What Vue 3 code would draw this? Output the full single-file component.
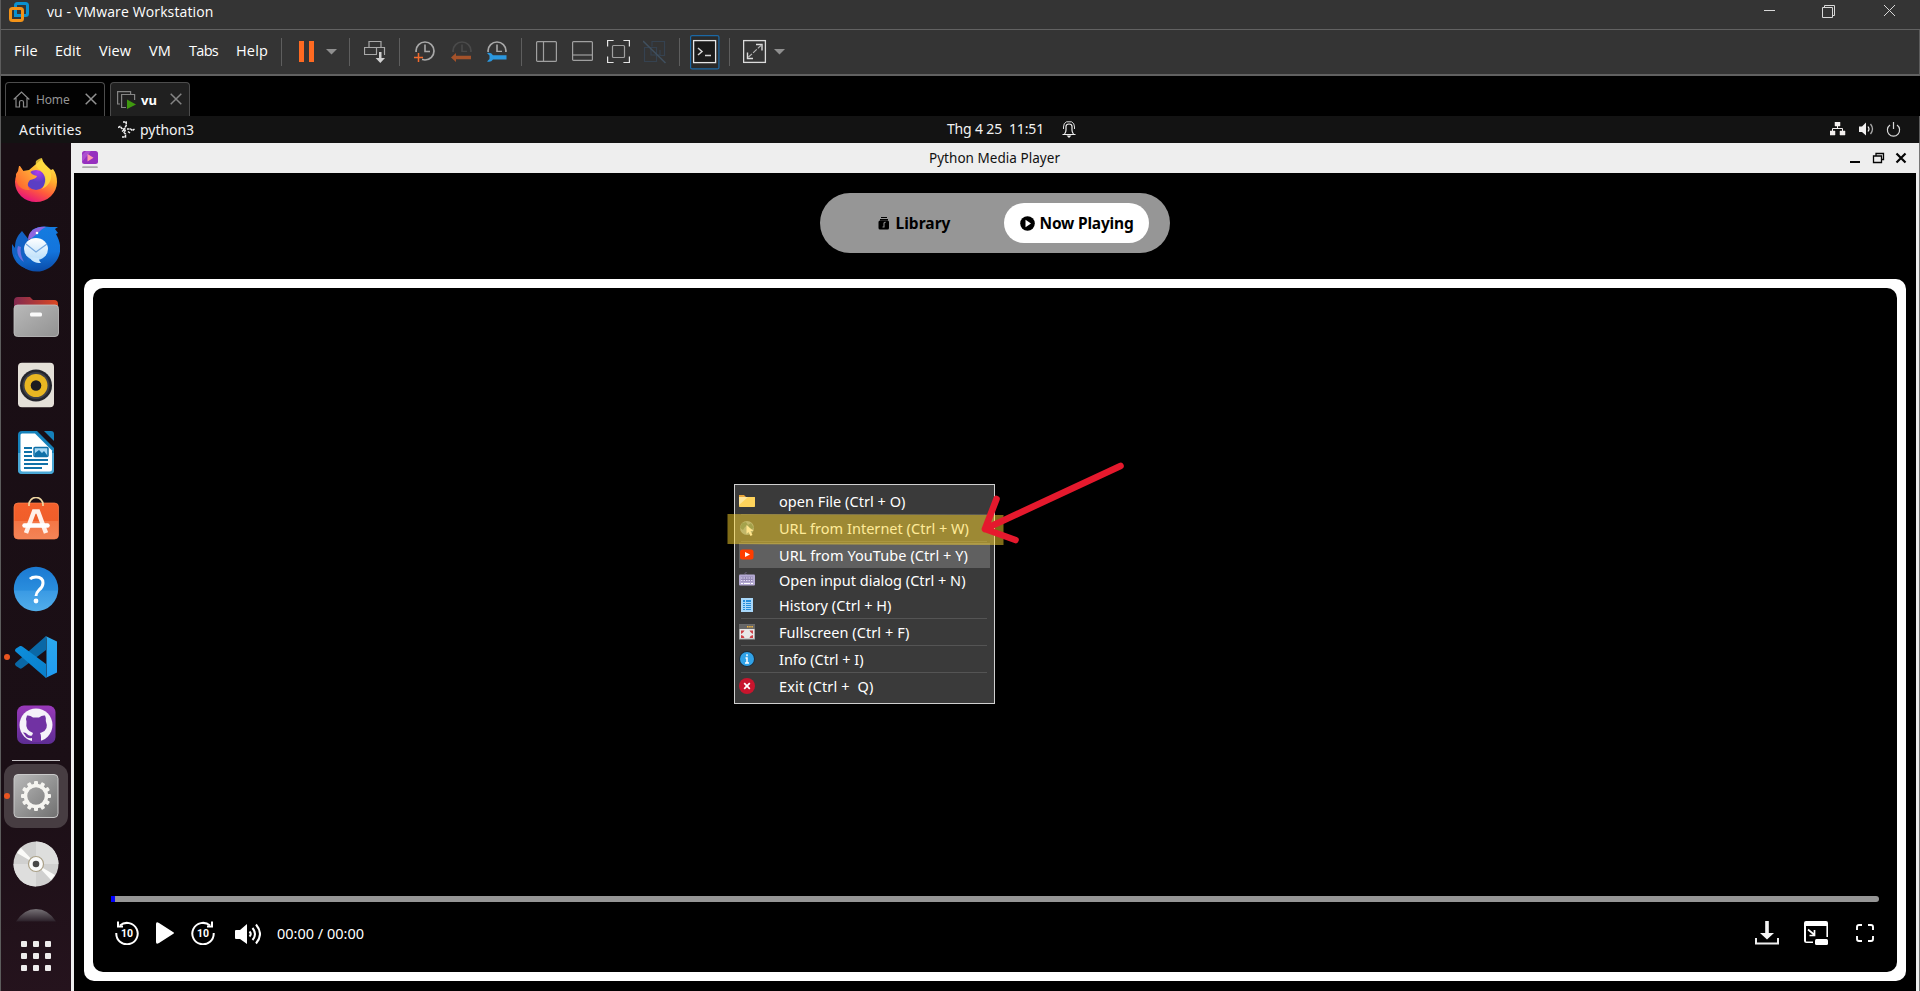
<script setup>
const menus = [
  ['File', 24], ['Edit', 26], ['View', 32], ['VM', 22], ['Tabs', 29], ['Help', 32],
]

// Spreads a label over an exact advance width through letter spacing.
const vFit = {
  mounted(el, { value }) {
    const spacing = (value - el.getBoundingClientRect().width) / el.textContent.length
    el.style.letterSpacing = `${spacing}px`
  },
}

const clock = (c) =>
  `<circle cx="11" cy="21" r="9" fill="none" stroke="${c}" stroke-width="1.7"/><path d="M11 14.5v7h5" fill="none" stroke="${c}" stroke-width="1.6"/>`
const rule = '<path d="M.5 8v28" stroke="#5e5e5e"/>'
const caret = '<path d="M0 19h11l-5.500 5.500z" fill="#8f8f8f"/>'

const tools = [
  { gap: 13, w: 1, art: rule },
  { gap: 17, w: 16, art: '<path d="M0 11h5v21H0zM10 11h5v21h-5z" fill="#ff6a21"/>' },
  { gap: 11, w: 11, art: caret },
  { gap: 12, w: 1, art: rule },
  { gap: 14, w: 22, art: '<path d="M5 17.500v-6h12v6M.5 17.500h20v7H.5zM12.500 17.500v7" fill="none" stroke="#a9a9a9" stroke-width="1.200"/><path d="M13 23.500h7v6h-7z" fill="#343434"/><path d="M15 22h2.500v6h3.500l-4.700 5-4.700-5h3.400z" fill="#d0d0d0"/>' },
  { gap: 13, w: 1, art: rule },
  { gap: 14, w: 22, art: clock('#a8a8a8') + '<path d="M0 22h6v11H0zM0 22h8v8H0z" fill="#343434"/><path d="M4.500 23v9M0 27.500h9" stroke="#f26a2c" stroke-width="1.500"/>' },
  { gap: 15, w: 22, art: clock('#4a4a4a') + '<path d="M0 22h22v12H0z" fill="#343434"/><path d="M0 27.500l5-4.500v2.800h15v3.500H5v2.800z" fill="#a4522a"/>' },
  { gap: 13, w: 23, art: clock('#a8a8a8') + '<path d="M0 22h22v12H0z" fill="#343434"/><path d="M1 23q4-1 6 2.200h13.500v4.300H7q-2 3.200-6 2l2.500-2.500v-3.500z" fill="#2b98df"/>' },
  { gap: 12, w: 1, art: rule },
  { gap: 14, w: 22, art: '<rect x=".6" y="11.600" width="19.800" height="19.800" rx="1" fill="none" stroke="#a0a0a0" stroke-width="1.200"/><path d="M7.500 12v19" stroke="#a0a0a0" stroke-width="1.200"/>' },
  { gap: 14, w: 22, art: '<rect x=".6" y="11.600" width="19.800" height="18.800" rx="1" fill="none" stroke="#a0a0a0" stroke-width="1.200"/><path d="M1 25h19" stroke="#a0a0a0" stroke-width="1.200"/>' },
  { gap: 13, w: 24, art: '<path d="M.6 16.500v-6h6M16.400 10.500h6v6M.6 26.500v6h6M16.400 32.500h6v-6" fill="none" stroke="#e4e4e4" stroke-width="1.200"/><rect x="5.500" y="15.500" width="12" height="12" rx="1" fill="none" stroke="#a0a0a0" stroke-width="1.200"/>' },
  { gap: 12, w: 24, art: '<path d="M9 16.500v-5h12.500v14h-5M1.500 17.500h12v14h-12zM8 17v8h9v-5" fill="none" stroke="#354250" stroke-width="1.200"/><path d="M0 11l22.500 22" stroke="#40505f" stroke-width="1.500"/>' },
  { gap: 12, w: 1, art: rule },
  { gap: 10, w: 30, art: '<rect x=".6" y="5.600" width="28.300" height="33.300" rx="1.500" fill="#2a2a2a" stroke="#1b68a5" stroke-width="1.200"/><rect x="3.600" y="10.600" width="22" height="22" fill="#1b1b1b" stroke="#e6e6e6" stroke-width="1.300"/><path d="M8 18l4 3.500L8 25M15 25.500h6" fill="none" stroke="#d5d5d5" stroke-width="1.500"/>' },
  { gap: 9, w: 1, art: rule },
  { gap: 13, w: 24, art: '<rect x=".6" y="10.600" width="21.800" height="21.800" fill="none" stroke="#dcdcdc" stroke-width="1.300"/><path d="M13 14.500h6v6M10 28.500H4.500v-6" fill="none" stroke="#dcdcdc" stroke-width="1.400"/><path d="M18.500 15l-14 13" stroke="#b5b5b5" stroke-width="1.200" stroke-dasharray="5 1.500"/>' },
  { gap: 7, w: 11, art: caret },
]

const gearTeeth = Array.from({ length: 12 }, (_, i) =>
  `<rect x="22" y="9" width="4" height="6" rx="1" fill="#f5f4f0" transform="rotate(${i * 30} 24 24)"/>`).join('')

const apps = [
  { name: 'firefox', art: '<defs><linearGradient id="ff" x1=".8" y1="0" x2=".35" y2="1"><stop offset="0" stop-color="#fff04f"/><stop offset=".4" stop-color="#ffae2d"/><stop offset=".7" stop-color="#ff5a3c"/><stop offset="1" stop-color="#e6127c"/></linearGradient><linearGradient id="ffl" x1="1" y1="0" x2="0" y2="1"><stop offset="0" stop-color="#ffc23a"/><stop offset="1" stop-color="#ff5a2c"/></linearGradient><radialGradient id="ffg" cx=".6" cy=".1"><stop offset="0" stop-color="#b03cf0"/><stop offset="1" stop-color="#5b3ec4"/></radialGradient></defs><path d="M30 2c1 5 5 7 9 11l2-1c3 4 4 8 4 13a21 20 0 0 1-42 0c0-5 2-9 5-13v-2l3 4 6-1z" fill="url(#ff)"/><circle cx="24" cy="23" r="10" fill="url(#ffg)"/><path d="M8 9l4 6 6-1c1 3 3 4 7 5-1 3-4 3-7 4-3 3-3 7 0 10C8 34 3 26 4 17l2-3 1-5z" fill="url(#ffl)"/><path d="M24 4c2-2 5-3 6-3 0 5 8 9 9 16s-3 12-9 15c4-6 5-13-2-19-3-2-5-5-4-9z" fill="#ffdd40" opacity=".8"/>' },
  { name: 'thunderbird', art: '<defs><linearGradient id="tb" x1=".4" y1="0" x2=".5" y2="1"><stop offset="0" stop-color="#147ce0"/><stop offset=".6" stop-color="#1374dc"/><stop offset="1" stop-color="#0b4ca8"/></linearGradient><linearGradient id="mail" x2="0" y2="1"><stop stop-color="#fff"/><stop offset="1" stop-color="#b9defa"/></linearGradient></defs><path d="M10 6c4 5 6 8 9 11 3 3 5 8 4 15l3 12C8 47 0 34 0 25v-6l3 4c0-7 2-12 7-17z" fill="#1262c4"/><path d="M20 5c6-4 13-4 18-3h8l-3 2 3 4-2 1c8 14 4 27-7 34C23 52 5 43 3 29c3 5 7 8 12 9z" fill="url(#tb)"/><path d="M16 15c0-9 8-14 18-13-6 2-9 9-18 13z" fill="#8f65df"/><circle cx="25" cy="8" r="1.300" fill="#fff"/><ellipse cx="24" cy="24" rx="12" ry="11" fill="url(#mail)"/><path d="M18 32c1 4 5 6 11 6-2-2-2-4-2-5z" fill="#cae7fd"/><path d="M14 19l10 8 11-8" fill="none" stroke="#75a8df" stroke-width="1.200"/><path d="M6 21c-2 6 0 12 6 16-3-6-4-10-3-15" fill="#6c70df"/>' },
  { name: 'files', art: '<defs><linearGradient id="fo"><stop offset="0" stop-color="#82294f"/><stop offset="1" stop-color="#dc4823"/></linearGradient><linearGradient id="fg" x2="1" y2="1"><stop stop-color="#b9b9b9"/><stop offset="1" stop-color="#929292"/></linearGradient></defs><g transform="translate(0 1)"><path d="M2 7q0-4 4-4h12l3 3h21q4 0 4 4v16H2z" fill="url(#fo)"/><rect x="2" y="11" width="44.500" height="31.500" rx="3.500" fill="url(#fg)" stroke="#c5c5c5" stroke-width=".8"/><rect x="18" y="18.500" width="12" height="4" rx="1.500" fill="#fafafa"/></g>' },
  { name: 'rhythmbox', art: '<rect x="6" y="1.700" width="36" height="44.500" rx="4" fill="#e4e0d8"/><circle cx="24" cy="24.500" r="16" fill="#24252c"/><circle cx="24" cy="24.500" r="13.500" fill="#3f4148"/><circle cx="24" cy="24.500" r="11.500" fill="#e9b722"/><circle cx="24" cy="24.500" r="5.300" fill="#1c1c20"/>' },
  { name: 'writer', art: '<path d="M10 2h15l17 17v22q0 4-4 4H10q-4 0-4-4V6q0-4 4-4z" fill="#1581ba"/><path d="M6 24h36v17q0 4-4 4H10q-4 0-4-4z" fill="#49a7d5"/><path d="M10 4.500h13l17 17V40q0 2.500-2.500 2.500h-27Q8.500 42.500 8.500 40V6q0-1.500 1.500-1.500z" fill="#fff"/><path d="M32 2h7q3 0 3 3v7z" fill="#1581ba"/><path d="M12 19h8M12 23h8M12 27h8M12 31h24M12 35h24M12 39h18" stroke="#1071a8" stroke-width="2"/><rect x="22" y="18.500" width="14" height="9" rx="1" fill="#a7d8f4" stroke="#1071a8" stroke-width="1.500"/><path d="M23 27v-3l4-3 3 3 2-2 3 4v1z" fill="#1071a8"/>' },
  { name: 'software', art: '<defs><linearGradient id="so" x2="0" y2="1"><stop stop-color="#f4602c"/><stop offset=".5" stop-color="#f05e2a"/><stop offset=".51" stop-color="#f47645"/><stop offset="1" stop-color="#f38457"/></linearGradient></defs><g transform="translate(0 -2)"><rect x="2" y="8" width="44.500" height="36" rx="4" fill="url(#so)" stroke="#ff814e" stroke-width=".7"/><path d="M17 11V9.500a7 7 0 0 1 14 0V11" fill="none" stroke="#eed6a1" stroke-width="1.700"/><path d="M14 38l8-21.500h4L34 38" fill="none" stroke="#fff0e9" stroke-width="4.500"/><path d="M12.500 30.500h23" stroke="#fff" stroke-width="4.500" stroke-linecap="round"/></g>' },
  { name: 'help', art: '<defs><linearGradient id="hp" x2="0" y2="1"><stop stop-color="#1b79d2"/><stop offset=".53" stop-color="#2a8edd"/><stop offset=".54" stop-color="#3a9ae4"/><stop offset="1" stop-color="#52aeea"/></linearGradient></defs><circle cx="24" cy="24" r="22.200" fill="url(#hp)"/><path d="M18 14q2-2 6-2 7 0 7 6 0 4-4 7-3 3-3 6" fill="none" stroke="#fff" stroke-width="3"/><circle cx="24" cy="36" r="2.400" fill="#fff"/>' },
  { name: 'code', running: true, art: '<defs><linearGradient id="vc" x2="1" y2="1"><stop stop-color="#0d8fdc"/><stop offset="1" stop-color="#0a7fca"/></linearGradient><linearGradient id="vr" x2="0" y2="1"><stop stop-color="#2ba8ec"/><stop offset="1" stop-color="#209bf2"/></linearGradient></defs><path d="M4 33l4 2.500q1.500.5 3-1L34 17V3L4 29.500q-2 1.500 0 3.500z" fill="#0a68a6"/><path d="M4 15.500L8 13q1.500-.5 3 1L34 31v14L4 19q-2-1.500 0-3.500z" fill="url(#vc)"/><path d="M33.500 3L45 8.500v31L33.500 45q1 0 1-3V6q0-3-1-3z" fill="url(#vr)"/>' },
  { name: 'github', art: '<defs><linearGradient id="gh" x2="0" y2="1"><stop stop-color="#9939ba"/><stop offset="1" stop-color="#5d2d93"/></linearGradient></defs><rect x="5" y="4.500" width="38.500" height="38.500" rx="7" fill="url(#gh)"/><circle cx="24" cy="24" r="16.500" fill="#f5f2f9"/><path d="M15 14.500q3-.5 6 2h6q3-2.500 6-2 1.500 3 .8 5.500 3.500 8.500-4.300 11.500l-1.500.5q1 1.500 1 4V41h-9v-4q-5 1-7-3l-2-2.500q3-.5 4 1.500 2 2.500 5 1.500l1-2.500q-8-2.500-6.500-11.500-1-3 .5-6z" fill="#7132a3"/>' },
]

const rows = [
  { text: 'open File (Ctrl + O)', w: 126.5, art: '<path d="M0 2h5l2 2h9v9H0z" fill="#e9a63b"/><rect y="4" width="16" height="10" rx=".7" fill="#ffd45c"/><path d="M0 4h9L0 12z" fill="#ffe69b"/>' },
  { rule: true },
  { text: 'URL from Internet (Ctrl + W)', w: 190, art: '<circle cx="8" cy="8" r="7" fill="#8296a5"/><path d="M3 3l4-1 2 3-3 2-2 3-3-2zM9 5l3-2 3 5-4 2z" fill="#496d69"/><path d="M7.500 5v9l2-2 2 4 2-1-2-4h3z" fill="#fff3ea"/>' },
  { rule: true },
  { text: 'URL from YouTube (Ctrl + Y)', w: 189, hover: true, art: '<rect x="1" y="2.500" width="13.500" height="10" rx="2.500" fill="#ff3d00"/><path d="M6 5v5l5-2.500z" fill="#fff"/>' },
  { text: 'Open input dialog (Ctrl + N)', w: 186.5, art: '<path d="M8 3.500L6 1.500 7.500 0" fill="none" stroke="#746b8b"/><rect y="2.500" width="16" height="11" rx="1" fill="#b4a9d2"/><path d="M2 4.500h12v5H2z" fill="#9388b3"/><path d="M2 6h12M2 8.500h12" stroke="#e2daf4" stroke-dasharray="1.500 1"/><path d="M2 11.500h2M5 11.500h6M12 11.500h2" stroke="#fff"/>' },
  { text: 'History (Ctrl + H)', w: 112.5, art: '<rect x="2" y="1" width="12" height="14" fill="#a9d8fa"/><path d="M4 3h2v2H4zM7 3h5v2H7zM4 6h2v1H4zM7 6h5v1H7zM4 8h2v1H4zM7 8h5v1H7zM4 10h2v1H4zM7 10h5v1H7zM4 12h2v1H4zM7 12h5v1H7z" fill="#268edc"/>' },
  { rule: true },
  { text: 'Fullscreen (Ctrl + F)', w: 130.5, art: '<rect x=".5" y="1" width="15" height="14" fill="#e8e8e8" stroke="#a8a8a8"/><path d="M0 .5h16v4.500H0z" fill="#666"/><path d="M8 2.800h6" stroke="#f2b33c" stroke-width="1.500" stroke-dasharray="1.500 .7"/><path d="M2 6.500h3.500L4.500 8l-1 1L2 10zM14 6.500h-3.500l1 1.500 1 1 1.500 1zM2 14h3.500l-1-2L2 11zM14 14h-3.500l1-2 2.500-1z" fill="#ce4047"/>' },
  { rule: true },
  { text: 'Info (Ctrl + I)', w: 84.5, art: '<circle cx="8" cy="8" r="7.900" fill="#1a2b3b"/><circle cx="8" cy="8" r="7" fill="#31a2e7"/><path d="M8 3.300v1.900M6.500 7H8v5M6 12h4" fill="none" stroke="#fff" stroke-width="1.500"/>' },
  { rule: true },
  { text: 'Exit (Ctrl +  Q)', w: 94.5, art: '<circle cx="8" cy="8" r="8" fill="#c8152d"/><path d="M5.200 5.200l5.600 5.600M10.800 5.200l-5.600 5.600" stroke="#fff" stroke-width="1.700"/>' },
]
</script>

<template>
  <div class="host">
    <header class="titlebar">
      <svg class="logo" width="21" height="21" viewBox="0 0 21 21">
        <rect x="6.500" y="1.500" width="12" height="12" rx="2" fill="none" stroke="#0a91d0" stroke-width="3" />
        <rect x="1.500" y="6.500" width="12" height="12" rx="2" fill="none" stroke="#f39318" stroke-width="3" />
        <path d="M6.500 8v5.500H12" fill="none" stroke="#0a91d0" stroke-width="3" />
      </svg>
      <span v-fit="166.5" class="caption">vu - VMware Workstation</span>
      <svg class="winctl" width="132" height="20" viewBox="0 0 132 20">
        <path d="M0 10.500h11M58.500 7.500v10h10v-10zM60.500 7v-1.500h10v10H69" fill="none" stroke="#d8d8d8" />
        <path d="M120 5l11 11M131 5l-11 11" fill="none" stroke="#d8d8d8" />
      </svg>
    </header>

    <nav class="toolbar">
      <span v-for="[label, w] in menus" :key="label" class="menu" :style="{ width: `${w}px` }"><span v-fit="w">{{ label }}</span></span>
      <svg
        v-for="(t, i) in tools" :key="i" :width="t.w" height="44" :viewBox="`0 0 ${t.w} 44`"
        :style="{ marginLeft: `${t.gap}px` }" v-html="t.art"
      />
    </nav>

    <div class="tabs">
      <div class="tab home">
        <svg width="17" height="17" viewBox="0 0 17 17"><path d="M.7 8.500L8.500 1l7.800 7.500M3 7v9h3.500v-5q0-1.500 2-1.500t2 1.500v5H14V7" fill="none" stroke="#8c8c8c" stroke-width="1.200" /></svg>
        <span v-fit="33.5">Home</span>
        <svg width="12" height="12" viewBox="0 0 12 12"><path d="M.7.7l10.600 10.600M11.300.7L.7 11.300" stroke="#929292" stroke-width="1.500" /></svg>
      </div>
      <div class="tab current">
        <svg width="19" height="18" viewBox="0 0 19 18"><path d="M3 13H.6V.6h13V3M9 16.500H4.600v-13h13V9" fill="none" stroke="#858585" stroke-width="1.200" /><path d="M10 8.500l9 5-9 4.500z" fill="#3f990f" /></svg>
        <b v-fit="16">vu</b>
        <svg width="12" height="12" viewBox="0 0 12 12"><path d="M.7.7l10.600 10.600M11.300.7L.7 11.300" stroke="#858585" stroke-width="1.500" /></svg>
      </div>
    </div>

    <div class="panel">
      <span v-fit="63" class="activities">Activities</span>
      <svg class="pyicon" width="17" height="17" viewBox="0 0 17 17"><path d="M5 1h3.200v3.500L6.500 7.500M0 6.500l2-1 2.500 2.500h3M4 16h3.500v-3l-1.500-1.500 1.500-2.500M9 8h3.500l2 1.500L16.500 8M10 10.500l2 1.500M4 10.500l2.500-2" fill="none" stroke="#f2f2f2" stroke-width="1.500" stroke-dasharray="2.600 .5" /></svg>
      <span v-fit="54" class="process">python3</span>
      <span v-fit="97" class="clock">Thg 4 25&nbsp; 11:51</span>
      <svg class="bell" width="14" height="17" viewBox="0 0 14 17"><path d="M.5 13.500h13M2.500 13Q4 11.500 4 9V5.500Q4 3 7 3t3 2.500V9q0 2.500 1.500 4" fill="none" stroke="#eee" stroke-width="1.200" /><path d="M1.500 8V6Q1.500 2 4.500.8M12.500 8V6q0-4-3-5.200M4.500.8h5" fill="none" stroke="#ddd" stroke-width="1" /><path d="M4.500 14.500h5L7 17z" fill="#eee" /></svg>
      <svg class="status" width="71" height="15" viewBox="0 0 71 15">
        <path d="M5 0h5v4H5zM0 9h5v4H0zM10 9h5v4h-5z" fill="#f4f0ef" stroke="#f4f0ef" stroke-width=".5" />
        <path d="M7.500 4v3M2.500 10V6.500h10V10" fill="none" stroke="#f4f0ef" />
        <path d="M29 4.500h3L36 .5v13L32 10h-3z" fill="#f2f0f0" /><path d="M38 4.500q2 2.500 0 5" fill="none" stroke="#f2f0f0" stroke-width="1.200" /><path d="M40.500 2q4 5 0 10" fill="none" stroke="#aaa" stroke-width="1.300" />
        <path d="M60 3a6.100 6.100 0 1 0 7 0M63.500 0v7" fill="none" stroke="#d9d9d9" stroke-width="1.200" />
      </svg>
    </div>

    <main class="desktop">
      <aside class="dock">
        <div v-for="a in apps" :key="a.name" class="slot" :class="{ running: a.running }">
          <svg width="48" height="48" viewBox="0 0 48 48" v-html="a.art" />
        </div>
        <hr>
        <div class="slot running focused">
          <svg width="48" height="48" viewBox="0 0 48 48">
            <defs><linearGradient id="set" x2="1" y2="1"><stop stop-color="#bababa" /><stop offset="1" stop-color="#707070" /></linearGradient></defs>
            <rect x="2" y="2.500" width="44" height="43" rx="4" fill="url(#set)" stroke="#c9c9c9" stroke-width="1" />
            <g v-html="gearTeeth" /><circle cx="24" cy="24" r="10.500" fill="none" stroke="#f5f4f0" stroke-width="3.500" />
          </svg>
        </div>
        <div class="slot disc">
          <svg width="48" height="48" viewBox="0 0 48 48">
            <circle cx="24" cy="24" r="22.500" fill="#d0d0cf" /><path d="M24 24V1.500A22.500 22.500 0 0 1 46.500 24zM24 24v22.500A22.500 22.500 0 0 1 1.500 24z" fill="#dededd" />
            <path d="M24 24L5 13l4-5zM24 24l19 11-4 5z" fill="#fbfbf9" />
            <circle cx="24" cy="24" r="7.500" fill="#fafafa" stroke="#aaa087" stroke-width="1.200" /><circle cx="24" cy="24" r="3.300" fill="#484848" />
          </svg>
        </div>
        <svg class="peek" width="48" height="14" viewBox="0 0 48 14">
          <defs><linearGradient id="pk" x2="0" y2="1"><stop stop-color="#767176" /><stop offset="1" stop-color="#2b2029" /></linearGradient></defs>
          <path d="M4 13.500Q12 1 24 1t20 12.500z" fill="url(#pk)" />
        </svg>
        <div class="launcher"><i v-for="n in 9" :key="n" /></div>
      </aside>

      <section class="window">
        <div class="wintitle">
          <svg class="appicon" width="18" height="18" viewBox="0 0 18 18"><rect x="1" width="16" height="13" rx="2.500" fill="#9630bf" /><path d="M1 4l4-4h5L1 11z" fill="#bd6bdc" opacity=".55" /><path d="M6.500 3v7.500l6-3.700z" fill="#ff9aad" /><path d="M2 16.200h14" stroke="#aaa" stroke-width="1.700" stroke-linecap="round" /></svg>
          <span v-fit="131">Python Media Player</span>
          <svg width="57" height="14" viewBox="0 0 57 14"><path d="M0 11h10" stroke="#050505" stroke-width="2" /><path d="M23.500 5h8v6.500h-8zM26 5V2.500h7.500v6H32" fill="none" stroke="#050505" stroke-width="1.300" /><path d="M46.500 2.500l9 9M55.500 2.500l-9 9" stroke="#050505" stroke-width="2.200" /></svg>
        </div>

        <div class="body">
          <div class="switch">
            <div class="choice">
              <svg width="12" height="13" viewBox="0 0 12 13"><path d="M3 0h6v1H3zM2 2h8v1.500H2z" /><rect x=".5" y="3.500" width="10.500" height="9" rx="1.500" /><path d="M7.500 5L6 6v4H4.500" stroke="#8e8e8e" stroke-width="1.100" fill="none" /></svg>
              <b v-fit="55">Library</b>
            </div>
            <div class="choice on">
              <svg width="15" height="15" viewBox="0 0 15 15"><circle cx="7.500" cy="7.500" r="7.300" /><path d="M5.500 3.800v7.400l5.500-3.700z" fill="#fff" /></svg>
              <b v-fit="94">Now Playing</b>
            </div>
          </div>

          <div class="frame">
            <div class="stage">
              <div class="track"><i /></div>
              <div class="controls">
                <svg width="24" height="24" viewBox="0 0 24 24"><path d="M5 4.500A10.700 10.700 0 1 1 1.300 12" fill="none" stroke="#fff" stroke-width="2" /><path d="M3 .5v5h5" fill="none" stroke="#fff" stroke-width="2" /><text x="12" y="16" class="ten">10</text></svg>
                <svg class="play" width="18" height="22" viewBox="0 0 18 22"><path d="M0 2q0-3 3-1l14 9q2 1 0 2L3 21q-3 2-3-1z" fill="#fff" /></svg>
                <svg class="fwd" width="24" height="24" viewBox="0 0 24 24"><path d="M19 4.500A10.700 10.700 0 1 0 22.700 12" fill="none" stroke="#fff" stroke-width="2" /><path d="M21 .5v5h-5" fill="none" stroke="#fff" stroke-width="2" /><text x="12" y="16" class="ten">10</text></svg>
                <svg class="vol" width="26" height="22" viewBox="0 0 26 22"><path d="M0 8q0-1 1-1h4l7-6v20l-7-5H1q-1 0-1-1z" fill="#fff" /><path d="M14.500 8.500q2.500 2.500 0 5M17.500 5q5 6 0 12M21 1.500q8 9.500 0 19" fill="none" stroke="#fff" stroke-width="2" /></svg>
                <span class="time"><span v-fit="87">00:00 / 00:00</span></span>
                <svg class="save" width="24" height="24" viewBox="0 0 24 24"><path d="M1 17v5.500h22V17" fill="none" stroke="#eee" stroke-width="2" /><path d="M10.200 0h3.600v12H19l-7 6.500L5 12h5.200z" fill="#f4f4f4" /></svg>
                <svg class="pip" width="24" height="24" viewBox="0 0 24 24"><path d="M2 0h20q2 0 2 2v14h-1.600V5H2v15q0 .6.600.600H9V22H2.500Q0 22 0 20V2q0-2 2-2z" fill="#fff" /><rect x="11" y="18" width="13" height="6" rx="1.500" fill="#fff" /><path d="M4 8.500l6 5M10.500 9v5.500h-5" fill="none" stroke="#fff" stroke-width="1.700" /></svg>
                <svg class="full" width="18" height="18" viewBox="0 0 18 18"><path d="M1 6V3q0-2 2-2h3M12 1h3q2 0 2 2v3M1 12v3q0 2 2 2h3M12 17h3q2 0 2-2v-3" fill="none" stroke="#fff" stroke-width="1.900" /></svg>
              </div>
            </div>
          </div>
        </div>
      </section>
    </main>

    <div class="context">
      <template v-for="(r, i) in rows" :key="i">
        <div v-if="r.rule" class="divider" />
        <div v-else class="row" :class="{ hover: r.hover }">
          <svg width="16" height="16" viewBox="0 0 16 16" v-html="r.art" />
          <span v-fit="r.w">{{ r.text }}</span>
        </div>
      </template>
    </div>

    <svg class="marker" width="410" height="100" viewBox="720 456 410 100">
      <path d="M727.500 514L1003.500 515V545L727.500 544z" fill="#ffd72d" fill-opacity=".5" />
      <path d="M1120.500 466L985 529M996.500 499L985 529L1015.500 540" fill="none" stroke="#e5192d" stroke-width="6.600" stroke-linecap="round" stroke-linejoin="round" />
    </svg>
  </div>
</template>

<style>
html, body { margin: 0; background: #000; overflow: hidden; }
</style>

<style scoped>
.host { position: relative; width: 1920px; height: 991px; box-sizing: border-box; display: flex; flex-direction: column; overflow: hidden; background: #000; color: #fff; border-left: 1px solid #5c5c5c; font: 14px "Noto Sans", "Open Sans", sans-serif; white-space: pre; }
svg { display: block; flex: none; }
.titlebar { height: 29px; flex: none; display: flex; background: #343434; border-bottom: 1px solid #626262; font: 14px/24px "Open Sans", "Noto Sans", sans-serif; }
.logo { margin: 2px 0 0 8px; }
.caption { margin-left: 17px; }
.winctl { margin-left: auto; margin-right: 24px; }
.toolbar { height: 44px; flex: none; display: flex; padding-left: 13px; background: #343434; border-bottom: 2px solid #616161; border-right: 1px solid #5c5c5c; font: 14.500px/42px "Open Sans", "Noto Sans", sans-serif; }
.menu { flex: none; margin-right: 18px; }
.menu:nth-child(6) { margin-right: 0; }
.menu:nth-child(1) { margin-right: 17px; }
.tabs { height: 40px; flex: none; display: flex; align-items: flex-end; gap: 5px; padding-left: 4px; }
.tab { box-sizing: border-box; height: 34px; display: flex; align-items: center; border: 1px solid #4c4c4c; border-bottom: 0; border-radius: 4px 4px 0 0; background: #020202; color: #949494; font-size: 12px; }
.tab svg:last-child { margin-top: -2px; }
.home { width: 100px; padding: 0 8px 0 7px; }
.home span { margin: 0 15px 0 6px; }
.current { width: 80px; background: #202020; color: #fff; padding-left: 6px; font-size: 13px; }
.current b { margin: 0 13px 0 5px; }
.panel { height: 27px; flex: none; display: flex; align-items: center; background: #131313; color: #f2f2f2; border-right: 1px solid #5c5c5c; font-size: 14px; line-height: 26px; }
.activities { margin-left: 18px; }
.pyicon { margin-left: 36px; margin-top: -1px; }
.process { margin-left: 5px; }
.clock { margin-left: 753px; margin-top: -1px; }
.bell { margin-left: 18px; }
.status { margin: -1px 18px 0 auto; }
.desktop { flex: 1; display: flex; border-right: 1px solid #777; min-height: 0; }
.dock { width: 70px; flex: none; display: flex; flex-direction: column; align-items: center; padding-top: 4px; box-sizing: border-box; background: linear-gradient(172deg, #190e14, #1b0f16 75%, #25131d); }
.slot { position: relative; width: 70px; height: 68px; flex: none; display: grid; place-items: center; }
.running::before { content: ""; position: absolute; left: 3px; top: 31px; width: 6px; height: 6px; border-radius: 50%; background: #e95420; }
.dock hr { width: 48px; height: 1px; flex: none; border: 0; margin: 1px 0 3px; background: #c4c0c3; }
.focused { width: 64px; height: 64px; background: #473d42; border-radius: 12px; }
.focused::before { left: 0; top: 29px; }
.disc { margin-top: 2px; }
.peek { margin-top: 10px; }
.launcher { margin-top: 19px; display: grid; grid-template-columns: repeat(3, 6px); gap: 6px; }
.launcher i { width: 6px; height: 6px; border-radius: 1px; background: #eeecec; }
.window { flex: 1; display: flex; flex-direction: column; background: #eee; }
.wintitle { height: 30px; flex: none; display: flex; align-items: center; justify-content: space-between; padding: 0 12px 0 10px; color: #111; font-size: 13.500px; }
.wintitle span { margin-left: 40px; }
.appicon { margin-top: 3px; }
.body { flex: 1; margin: 0 3px; background: #000; display: flex; flex-direction: column; }
.switch { width: 350px; height: 60px; flex: none; align-self: center; margin-top: 20px; border-radius: 30px; box-sizing: border-box; padding: 10px 21px 10px 38px; display: flex; justify-content: space-between; background: #969696; color: #000; font-size: 15.500px; }
.choice { width: 112px; display: flex; align-items: center; justify-content: center; gap: 6px; }
.choice b { white-space: nowrap; }
.on { width: 145px; gap: 5px; border-radius: 20px; background: #fff; }
.frame { height: 702px; box-sizing: border-box; margin: 26px 10px 0; border-radius: 10px; background: #fff; padding: 9px; }
.stage { height: 100%; border-radius: 10px; background: #000; display: flex; flex-direction: column; justify-content: flex-end; padding: 0 18px; box-sizing: border-box; }
.track { height: 6px; border-radius: 0 3px 3px 0; background: #969696; overflow: hidden; }
.track i { display: block; width: 4px; height: 6px; background: #00f; }
.controls { height: 70px; display: flex; align-items: center; padding: 0 5px 8px 4px; box-sizing: border-box; }
.ten { font: bold 10.500px Roboto, sans-serif; fill: #fff; text-anchor: middle; }
.play, .fwd { margin-left: 17px; }
.vol { margin-left: 20px; margin-top: 2px; }
.time { margin-left: 16px; width: 88px; font: 14.500px "Noto Sans", sans-serif; }
.save { margin-left: auto; }
.pip { margin-left: 25px; }
.full { margin-left: 28px; }
.context { position: absolute; left: 733px; top: 484px; width: 261px; height: 220px; box-sizing: border-box; padding: 4px; border: 1px solid #d0d0d0; background: #3a3a3a; }
.row { height: 25px; display: flex; align-items: center; gap: 24px; font-size: 14.500px; line-height: 25px; }
.row svg { margin-top: -1px; }
.hover { background: #606060; }
.divider { height: 1px; margin: 0 3px 1px 2px; background: #545454; }
.marker { position: absolute; left: 719px; top: 456px; }
</style>
